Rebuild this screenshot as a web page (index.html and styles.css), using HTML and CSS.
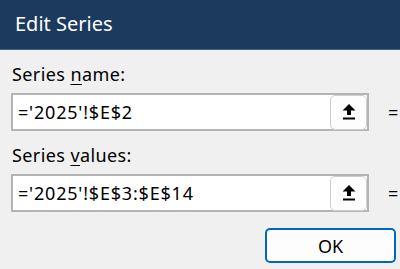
FILE: index.html
```html
<!DOCTYPE html>
<html>
<head>
<meta charset="utf-8">
<link rel="stylesheet" href="styles.css">
</head>
<body>
<div class="dialog">
  <div class="titlebar">Edit Series</div>
  <div class="content">
    <div class="label">Series <u>n</u>ame:</div>
    <div class="row">
      <div class="input">
        <span class="value">='2025'!$E$2</span>
        <button class="collapse" aria-label="Collapse dialog">
          <svg width="16" height="18" viewBox="0 0 16 18"><path d="M8 1 L14.5 7.5 H10 V12 H6 V7.5 H1.5 Z" fill="#000"/><rect x="2" y="14.5" width="12" height="2" fill="#000"/></svg>
        </button>
      </div>
      <span class="eq">=</span>
    </div>
    <div class="label">Series <u>v</u>alues:</div>
    <div class="row">
      <div class="input">
        <span class="value">='2025'!$E$3:$E$14</span>
        <button class="collapse" aria-label="Collapse dialog">
          <svg width="16" height="18" viewBox="0 0 16 18"><path d="M8 1 L14.5 7.5 H10 V12 H6 V7.5 H1.5 Z" fill="#000"/><rect x="2" y="14.5" width="12" height="2" fill="#000"/></svg>
        </button>
      </div>
      <span class="eq">=</span>
    </div>
    <div class="actions">
      <button class="ok">OK</button>
    </div>
  </div>
</div>
</body>
</html>
```
FILE: styles.css
```css
html, body {
  margin: 0;
  padding: 0;
  background: #f0f0f0;
  overflow: hidden;
}
.dialog {
  width: 400px;
  height: 269px;
  font-family: "Noto Sans", "Open Sans", sans-serif;
  color: #000;
}
.titlebar {
  height: 50px;
  box-sizing: border-box;
  background: #1b3a5e;
  border-bottom: 1px solid #4a6282;
  color: #fff;
  font-size: 20px;
  line-height: 48px;
  padding-left: 15px;
}
.content {
  padding: 0 0 0 11px;
}
.label {
  font-size: 18px;
  letter-spacing: 0.4px;
  line-height: 24px;
  height: 24px;
  padding-top: 12px;
  margin-bottom: 7px;
  padding-left: 1px;
}
.label u {
  text-decoration-thickness: 1px;
  text-underline-offset: 3px;
}
.row {
  display: flex;
  align-items: center;
}
.input {
  width: 358px;
  height: 38px;
  box-sizing: border-box;
  border: 2px solid #b4b4b4;
  background: #fff;
  display: flex;
  align-items: center;
  justify-content: space-between;
  padding: 0 0 0 5px;
}
.value {
  font-size: 18px;
  letter-spacing: 0.8px;
}
.collapse {
  width: 37px;
  height: 35px;
  margin-right: 0;
  box-sizing: border-box;
  border: 1px solid #cfcfcf;
  border-radius: 5px;
  background: #fdfdfd;
  display: flex;
  align-items: center;
  justify-content: center;
  padding: 0;
}
.collapse svg {
  display: block;
}
.eq {
  margin-left: 19px;
  font-size: 18px;
}
.actions {
  display: flex;
  justify-content: flex-end;
  padding-top: 16px;
  padding-right: 4px;
}
.ok {
  width: 131px;
  height: 35px;
  box-sizing: border-box;
  border: 2px solid #0067c0;
  border-radius: 5px;
  background: #fdfdfd;
  font-family: "Noto Sans", "Open Sans", sans-serif;
  font-size: 18px;
  color: #000;
  padding: 0;
}
```
